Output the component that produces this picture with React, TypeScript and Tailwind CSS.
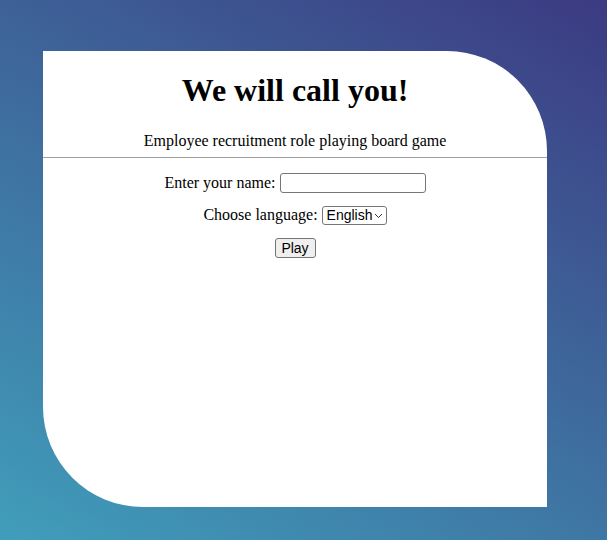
export default function App() {
  return (
    <div className="min-h-screen w-full bg-[linear-gradient(30deg,#409eba,#3c3a82)] pt-[51px] pl-[43px] pb-[33px]">
      <div className="w-[504px] h-[456px] bg-white rounded-tr-[100px] rounded-bl-[100px] text-center text-black font-['Liberation_Serif',serif]">
        <h1 className="pt-[21px] text-[32px] font-bold leading-[37px]">We will call you!</h1>
        <p className="mt-[23px] text-[16px] leading-[18px]">Employee recruitment role playing board game</p>
        <hr className="mt-[7px] border-0 border-t border-[#a0a0a0]" />
        <div className="mt-[13px] flex items-center justify-center gap-[4px] text-[16px]">
          <label htmlFor="name">Enter your name:</label>
          <input
            id="name"
            type="text"
            className="w-[146px] h-[20px] border border-[#767676] rounded-[3px] bg-white px-1 font-['Liberation_Sans',sans-serif] text-[13px]"
          />
        </div>
        <div className="mt-[8px] flex items-center justify-center gap-[4px] text-[16px]">
          <label htmlFor="lang">Choose language:</label>
          <div className="relative h-[19px] w-[65px] border border-[#767676] rounded-[3px] bg-white flex items-center pl-[4px] font-['Liberation_Sans',sans-serif] text-[14px] leading-none">
            <span>English</span>
            <svg className="absolute right-[3px] top-[6px]" width="9" height="6" viewBox="0 0 9 6" fill="none">
              <path d="M1 1l3.5 3.5L8 1" stroke="#333" strokeWidth="1" />
            </svg>
          </div>
        </div>
        <div className="mt-[11px] flex justify-center">
          <button className="h-[20px] w-[41px] border border-[#767676] rounded-[3px] bg-[#efefef] font-['Liberation_Sans',sans-serif] text-[14px] leading-none">
            Play
          </button>
        </div>
      </div>
    </div>
  );
}
